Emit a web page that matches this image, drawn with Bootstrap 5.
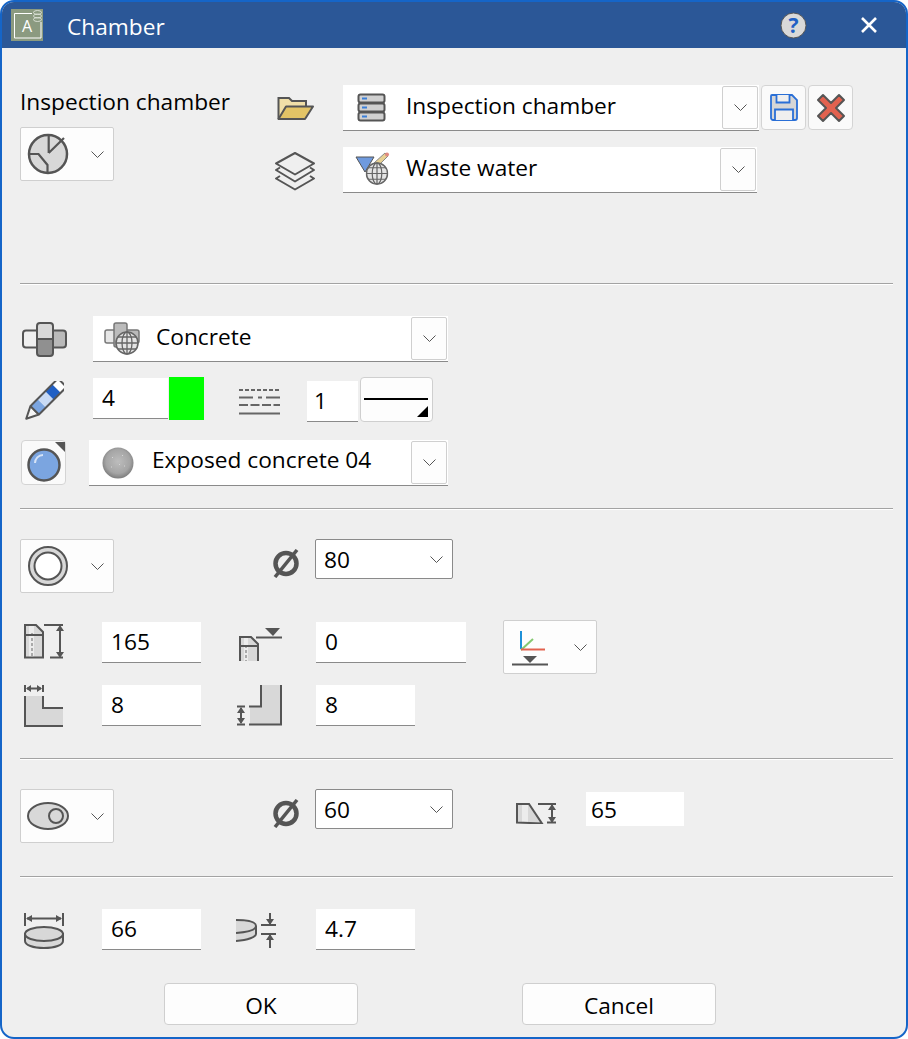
<!DOCTYPE html>
<html lang="en">
<head>
<meta charset="utf-8">
<title>Chamber</title>
<link href="https://cdn.jsdelivr.net/npm/bootstrap@5.3.0/dist/css/bootstrap.min.css" rel="stylesheet">
<style>
html,body{margin:0;width:908px;height:1039px;background:#fff;overflow:hidden}
body{font-family:"Open Sans","Noto Sans","Liberation Sans",sans-serif;font-size:22.7px;color:#000}
svg{display:block;flex:none}
.win{width:908px;height:1039px;border:2px solid #1565c8;border-radius:14px;background:#efefef;overflow:hidden}
.tbar{height:46px;background:#2b5797;color:#fff;padding-left:9px}
.ttl{font-size:22.7px;margin-left:24px;margin-top:5px;flex:1}
.helpi{margin-right:54px}
.closei{margin-right:29px}
.wbody{padding:0 13px 0 18px}
.sep{margin:0;opacity:1;border:0;border-top:1px solid #a3a3a3;border-bottom:1px solid #fff;height:2px}
.s1{height:235px;padding-top:37px}
.s2{height:223px;padding-top:31px}
.s3{height:248px;padding-top:29px}
.s4{height:116px;padding-top:29px}
.s5{padding-top:31px}
.lcol{width:257px}
.lbl{height:34px;line-height:33px;white-space:nowrap}
.ddb{width:94px;height:54px;background:#fdfdfd;border:1px solid #cfcfcf;border-radius:2px;padding:0 9px 0 6px}
.combo{height:46px;background:#fff;border-bottom:1px solid #8a8a8a;padding-left:14px;padding-right:1px}
.ctext{margin-left:20px;flex:1;white-space:nowrap;padding-bottom:2px}
.ctext.cup{padding-bottom:4px;margin-left:18px}
.cbtn{width:36px;height:43px;background:#fdfdfd;border:1px solid #cfcfcf;border-radius:2px;margin-top:1px;align-self:flex-start}
.w416{width:416px}.w414{width:414px}.w355{width:355px}.w359{width:359px}
.sq{width:45px;height:45px;background:#fafafa;border:1px solid #d4d4d4;border-radius:4px;padding:0}
.form-control.fld{background:#fff;border:0;border-bottom:1px solid #8a8a8a;border-radius:0;height:41px;padding:0 0 2px 9px;font-size:22.7px;color:#000;box-shadow:none;flex:none}
.form-control.nob{border-bottom:0;height:34px;padding:2px 0 0 5px}
.w99{width:99px}.w150{width:150px}.w75{width:75px}.form-control.w51{width:51px;padding-left:7px}.w98{width:98px}
.swatch{width:35px;height:43px;background:#0f0;margin-left:1px}
.lnb{width:73px;height:45px;background:#fdfdfd;border:1px solid #cfcfcf;border-radius:4px;margin-left:2px;padding:0}
.form-select.sel{width:138px;height:40px;border:1px solid #8a8a8a;border-radius:2px;padding:2px 0 0 8px;font-size:22.7px;color:#000;box-shadow:none;background-color:#fff;background-size:13px 7px;background-position:right 9px center;background-image:url("data:image/svg+xml,%3Csvg xmlns='http://www.w3.org/2000/svg' viewBox='0 0 13 7'%3E%3Cpath d='M.5.5l6 6 6-6' fill='none' stroke='%23555'/%3E%3C/svg%3E")}
.mbtn{width:194px;height:42px;background:#fdfdfd;border:1px solid #cfcfcf;border-radius:4px;font-size:22.7px;color:#000;padding:4px 0 0}
</style>
</head>
<body>
<svg width="0" height="0" class="position-absolute">
<defs>
<symbol id="chev" viewBox="0 0 13 7"><path d="M.5.5l6 6 6-6" fill="none" stroke="#555" stroke-width="1"/></symbol>
<symbol id="globe" viewBox="0 0 24 24"><circle cx="12" cy="12" r="11" fill="#e4e4e4" stroke="#666" stroke-width="1.6"/><ellipse cx="12" cy="12" rx="5" ry="11" fill="none" stroke="#666" stroke-width="1.3"/><path d="M12 1v22M1 12h22M3 6h18M3 18h18" fill="none" stroke="#666" stroke-width="1.3"/></symbol>
<symbol id="dia" viewBox="0 0 26 29"><circle cx="13" cy="14.500" r="10.500" fill="none" stroke="#555" stroke-width="4.500"/><path d="M2 28L24 1" stroke="#555" stroke-width="3.500"/></symbol>
</defs>
</svg>
<div class="win d-flex flex-column">
  <div class="tbar d-flex align-items-center">
    <svg width="32" height="32" viewBox="0 0 32 32"><rect width="32" height="32" fill="#8b9a80"/><path d="M3.500 4.500H21M30 13V29H3.500V4.500" fill="none" stroke="#fff"/><text x="16" y="23" text-anchor="middle" font-size="16" fill="#fff" font-family="Open Sans">A</text><g fill="none" stroke="#dfe4da" stroke-width=".9"><ellipse cx="26.500" cy="3.500" rx="4" ry="2"/><ellipse cx="26.500" cy="7" rx="4" ry="2"/><ellipse cx="26.500" cy="10.500" rx="4" ry="2"/></g></svg>
    <div class="ttl">Chamber</div>
    <svg class="helpi" width="27" height="27" viewBox="0 0 27 27"><circle cx="13.500" cy="13.500" r="12.500" fill="#d9d9d9" stroke="#555"/><text x="13.500" y="21" text-anchor="middle" font-size="21" font-weight="700" fill="#2060c4" font-family="Open Sans">?</text></svg>
    <svg class="closei" width="16" height="16" viewBox="0 0 16 16"><path d="M1 1l14 14M15 1L1 15" stroke="#fff" stroke-width="2.600"/></svg>
  </div>
  <div class="wbody">
    <section class="s1 d-flex">
      <div class="lcol">
        <div class="lbl">Inspection chamber</div>
        <button class="ddb mt-2 d-flex align-items-center justify-content-between" type="button" aria-label="Type">
          <svg width="42" height="42" viewBox="0 0 42 42"><circle cx="21" cy="21" r="19" fill="#d8d8d8" stroke="#555" stroke-width="2.500"/><path d="M21.700 2v18M37 5L21.700 20M2 21h9.500l9 11v9" fill="none" stroke="#555" stroke-width="2.200"/></svg>
          <svg width="13" height="7"><use href="#chev"/></svg>
        </button>
      </div>
      <div>
        <div class="d-flex">
          <div class="d-flex align-items-center" style="width:66px">
            <svg width="37" height="25" viewBox="0 0 37 25"><path d="M1.500 23V2H12l3 3h14v6" fill="#f0dfa8" stroke="#555" stroke-width="2"/><path d="M1.500 23L9 10.500H36L28 23z" fill="#e3c466" stroke="#555" stroke-width="2" stroke-linejoin="round"/></svg>
          </div>
          <div class="combo w416 d-flex align-items-center">
            <svg width="29" height="29" viewBox="0 0 29 29"><g fill="#d0d0d0" stroke="#555" stroke-width="2"><rect x="1.500" y="1.500" width="26" height="8" rx="2"/><rect x="1.500" y="10.500" width="26" height="8" rx="2"/><rect x="1.500" y="19.500" width="26" height="8" rx="2"/></g><path d="M5 5.500h5M5 14.500h5M5 23.500h5" stroke="#3a7fd8" stroke-width="2"/></svg>
            <div class="ctext">Inspection chamber</div>
            <div class="cbtn d-flex align-items-center justify-content-center"><svg width="13" height="7"><use href="#chev"/></svg></div>
          </div>
          <button class="sq d-flex align-items-center justify-content-center" style="margin-left:2px" type="button" aria-label="Save">
            <svg width="28" height="27" viewBox="0 0 28 27"><path d="M2 1h20l5 5v18a2 2 0 0 1-2 2H3a2 2 0 0 1-2-2V2a1 1 0 0 1 1-1z" fill="#d6d6d6" stroke="#2a6fd6" stroke-width="1.800"/><path d="M6.500 1v7.500h13V1M5 26V15.500h18V26" fill="#efefef" stroke="#2a6fd6" stroke-width="1.800"/></svg>
          </button>
          <button class="sq d-flex align-items-center justify-content-center" style="margin-left:2px" type="button" aria-label="Delete">
            <svg width="30" height="30" viewBox="0 0 30 30"><path d="M2 7l5-5 8 8 8-8 5 5-8 8 8 8-5 5-8-8-8 8-5-5 8-8z" fill="#e2624f" stroke="#555" stroke-width="2" stroke-linejoin="round"/></svg>
          </button>
        </div>
        <div class="d-flex" style="margin-top:16px">
          <div style="width:66px;margin-left:-3px;padding-top:4px;margin-right:3px">
            <svg width="42" height="40" viewBox="0 0 42 40"><g fill="none" stroke="#555" stroke-width="2" stroke-linejoin="round"><path d="M21 2L40 12.500 21 23.500 2 12.500z"/><path d="M6 16.500L2 19l19 11.500L40 19l-4-2.500"/><path d="M6 25L2 27.500l19 11 19-11-4-2.500"/></g></svg>
          </div>
          <div class="combo w414 d-flex align-items-center">
            <svg width="36" height="36" viewBox="0 0 36 36" style="margin-left:-2px;margin-right:-5px"><path d="M1 5h18l-9 15z" fill="#6f9ade" stroke="#555" stroke-width="1"/><path d="M19 11L30 1l3 3-10 10z" fill="#e8d193" stroke="#888"/><circle cx="32" cy="2.500" r="2" fill="#e08a80"/><use href="#globe" x="10.500" y="10" width="23" height="23"/></svg>
            <div class="ctext">Waste water</div>
            <div class="cbtn d-flex align-items-center justify-content-center"><svg width="13" height="7"><use href="#chev"/></svg></div>
          </div>
        </div>
      </div>
    </section>
    <hr class="sep">
    <section class="s2">
      <div class="d-flex">
        <div class="d-flex align-items-center" style="width:73px;padding-left:2px">
          <svg width="45" height="35" viewBox="0 0 45 35"><rect x="1" y="8.500" width="20" height="17" rx="3" fill="#efefef" stroke="#555" stroke-width="2"/><rect x="26" y="8.500" width="18" height="17" rx="3" fill="#b9b9b9" stroke="#555" stroke-width="2"/><path d="M15 17V4a3 3 0 0 1 3-3h10a3 3 0 0 1 3 3v13z" fill="#d8d8d8" stroke="#555" stroke-width="2"/><path d="M15 17v14a3 3 0 0 0 3 3h10a3 3 0 0 0 3-3V17z" fill="#909090" stroke="#555" stroke-width="2"/></svg>
        </div>
        <div class="combo w355 d-flex align-items-center" style="padding-left:11px">
          <svg width="36" height="33" viewBox="0 0 36 33"><rect x="1" y="8" width="14" height="13" rx="2" fill="#e6e6e6" stroke="#777" stroke-width="1.500"/><rect x="20" y="8" width="15" height="13" rx="2" fill="#b9b9b9" stroke="#777" stroke-width="1.500"/><rect x="10" y="1" width="13" height="24" rx="2" fill="#bbb" stroke="#777" stroke-width="1.500"/><use href="#globe" x="11" y="9" width="24" height="24"/></svg>
          <div class="ctext" style="margin-left:16px">Concrete</div>
          <div class="cbtn d-flex align-items-center justify-content-center"><svg width="13" height="7"><use href="#chev"/></svg></div>
        </div>
      </div>
      <div class="d-flex align-items-start" style="margin-top:15px;height:46px">
        <div style="width:73px;padding:4px 0 0 4px">
          <svg width="40" height="40" viewBox="0 0 40 40"><g transform="translate(1.500 38.500) rotate(-45)"><path d="M1 0L13-6V6z" fill="#f5f5f5" stroke="#555" stroke-width="2" stroke-linejoin="round"/><rect x="13" y="-6" width="10" height="12" fill="#7ba5e0"/><rect x="23" y="-6" width="11" height="12" fill="#c8daf4"/><rect x="34" y="-6" width="10" height="12" fill="#2160c4"/><rect x="44" y="-6" width="8" height="12" fill="#fff"/><rect x="13" y="-6" width="39" height="12" rx="1.500" fill="none" stroke="#555" stroke-width="2"/></g></svg>
        </div>
        <input class="form-control fld w75" style="margin-top:1px" value="4" aria-label="Pen">
        <div class="swatch"></div>
        <div style="padding:11px 0 0 35px;width:103px">
          <svg width="41" height="27" viewBox="0 0 41 27"><g fill="none" stroke="#666" stroke-width="1.800"><path d="M0 2h41" stroke-dasharray="4 2"/><path d="M0 9.500h14M19 9.500h4M27 9.500h14"/><path d="M0 17h41" stroke-dasharray="9 2.500"/><path d="M0 25.500h41"/></g></svg>
        </div>
        <input class="form-control fld w51" style="margin-top:4px" value="1" aria-label="Line type">
        <button class="lnb" type="button" aria-label="Line">
          <svg width="71" height="43" viewBox="0 0 71 43"><path d="M3 21h64" stroke="#000" stroke-width="2"/><path d="M56 39L67 28v11z" fill="#000"/></svg>
        </button>
      </div>
      <div class="d-flex align-items-start" style="margin-top:17px">
        <button class="sq d-flex" style="margin-left:1px;margin-right:23px" type="button" aria-label="Material">
          <svg width="43" height="43" viewBox="0 0 43 43"><circle cx="22" cy="24" r="15.500" fill="#7ba5e0" stroke="#555" stroke-width="2.500"/><path d="M13 22a8 8 0 0 1 8-8" fill="none" stroke="#d6e3f6" stroke-width="2"/><path d="M33 1h10v10z" fill="#555"/></svg>
        </button>
        <div class="combo w359 d-flex align-items-center" style="padding-left:13px">
          <svg width="32" height="32" viewBox="0 0 32 32"><defs><radialGradient id="sph" cx="50%" cy="45%" r="55%"><stop offset="0" stop-color="#bdbdbd"/><stop offset=".7" stop-color="#a5a5a5"/><stop offset="1" stop-color="#7d7d7d"/></radialGradient></defs><circle cx="16" cy="16" r="15.500" fill="url(#sph)"/><path d="M10 10l1 1M20 8l1 1M17 17l1 1M22 19l1 0M9 20l1 0" stroke="#d5d5d5"/></svg>
          <div class="ctext cup">Exposed concrete 04</div>
          <div class="cbtn d-flex align-items-center justify-content-center"><svg width="13" height="7"><use href="#chev"/></svg></div>
        </div>
      </div>
    </section>
    <hr class="sep">
    <section class="s3">
      <div class="d-flex align-items-start">
        <button class="ddb d-flex align-items-center justify-content-between" type="button" aria-label="Shape">
          <svg width="42" height="42" viewBox="0 0 42 42"><circle cx="21" cy="21" r="19" fill="#d8d8d8" stroke="#555" stroke-width="2"/><circle cx="21" cy="21" r="13.500" fill="#fff" stroke="#555" stroke-width="2"/></svg>
          <svg width="13" height="7"><use href="#chev"/></svg>
        </button>
        <div style="width:201px;padding:10px 0 0 159px"><svg width="26" height="29"><use href="#dia"/></svg></div>
        <select class="form-select sel" aria-label="Diameter"><option>80</option></select>
      </div>
      <div class="d-flex align-items-start" style="margin-top:27px;height:54px">
        <div style="width:82px;padding:4px 0 0 4px">
          <svg width="41" height="35" viewBox="0 0 41 35"><path d="M1 33V1h11l7 7v25z" fill="#d8d8d8"/><path d="M5 1.500h5V33H5z" fill="#ececec"/><path d="M8 9v24" stroke="#aaa" stroke-width="2" stroke-dasharray="3 2"/><path d="M1 33.500V1h11l7 7v25.500zM1 11h18" fill="none" stroke="#555" stroke-width="2"/><path d="M20 1h19M26 33.500h13" stroke="#555" stroke-width="2"/><path d="M36 3v29" stroke="#555" stroke-width="2"/><path d="M36 1l-4 6h8zM36 34l-4-6h8z" fill="#555"/></svg>
        </div>
        <input class="form-control fld w99" style="margin-top:2px" value="165" aria-label="Height">
        <div style="width:115px;padding:8px 0 0 37px">
          <svg width="45" height="33" viewBox="0 0 45 33"><path d="M2 33V9h11l6 6v18z" fill="#d8d8d8"/><path d="M6 9h4v24H6z" fill="#ececec"/><path d="M8 17v16" stroke="#aaa" stroke-width="2" stroke-dasharray="3 2"/><path d="M2 33V9h11l7 7v17M2 18h18" fill="none" stroke="#555" stroke-width="2"/><path d="M18 9.500h26" stroke="#555" stroke-width="2"/><path d="M27 0h15l-7 8z" fill="#555"/></svg>
        </div>
        <input class="form-control fld w150" style="margin-top:2px" value="0" aria-label="Level">
        <button class="ddb d-flex align-items-center justify-content-between" style="margin-left:37px;padding-left:8px" type="button" aria-label="Reference">
          <svg width="37" height="40" viewBox="0 0 37 40"><path d="M9 4v18" stroke="#1e90d8" stroke-width="2"/><path d="M9 23l12-11" stroke="#84c870" stroke-width="2"/><path d="M9 22.500h24" stroke="#e2624f" stroke-width="2"/><path d="M11 29h14l-7 7z" fill="#555"/><path d="M0 37.500h36" stroke="#555" stroke-width="2"/></svg>
          <svg width="13" height="7"><use href="#chev"/></svg>
        </button>
      </div>
      <div class="d-flex align-items-start" style="margin-top:11px">
        <div style="width:82px;padding:0 0 0 4px">
          <svg width="40" height="42" viewBox="0 0 40 42"><path d="M1 11h18v12h20v17H1z" fill="#d8d8d8"/><path d="M1 11v30h38M19 11v12h20" fill="none" stroke="#555" stroke-width="2"/><path d="M1 0v7M19 0v7" stroke="#555" stroke-width="2"/><path d="M3 3.500h14" stroke="#555" stroke-width="2"/><path d="M2 3.500l5-3.500v7zM18 3.500l-5-3.500v7z" fill="#555"/></svg>
        </div>
        <input class="form-control fld w99" value="8" aria-label="Wall">
        <div style="width:115px;padding:0 0 0 35px">
          <svg width="46" height="41" viewBox="0 0 46 41"><path d="M26 0h18v40H14V22h12z" fill="#d8d8d8"/><path d="M25 0v21.500H13M45 0v39.500H13" fill="none" stroke="#555" stroke-width="2"/><path d="M1 21.500h8M1 39.500h8" stroke="#555" stroke-width="2"/><path d="M5 23v15" stroke="#555" stroke-width="2"/><path d="M5 22l-4 6h8zM5 39l-4-6h8z" fill="#555"/></svg>
        </div>
        <input class="form-control fld w99" value="8" aria-label="Floor">
      </div>
    </section>
    <hr class="sep">
    <section class="s4">
      <div class="d-flex align-items-start">
        <button class="ddb d-flex align-items-center justify-content-between" type="button" aria-label="Cover">
          <svg width="42" height="28" viewBox="0 0 42 28"><ellipse cx="21" cy="14" rx="20" ry="13" fill="#d8d8d8" stroke="#555" stroke-width="2"/><circle cx="29" cy="14" r="7" fill="none" stroke="#555" stroke-width="2"/></svg>
          <svg width="13" height="7"><use href="#chev"/></svg>
        </button>
        <div style="width:201px;padding:10px 0 0 159px"><svg width="26" height="29"><use href="#dia"/></svg></div>
        <select class="form-select sel" aria-label="Diameter"><option>60</option></select>
        <div style="width:133px;padding:14px 0 0 63px">
          <svg width="40" height="21" viewBox="0 0 40 21"><path d="M1 1h12l12 19H1z" fill="#d8d8d8"/><path d="M6 1h6v19H6z" fill="#ececec"/><path d="M1 19.500V1h12l13 19.500z" fill="none" stroke="#555" stroke-width="2"/><path d="M22 1h18M31 19.500h9" stroke="#555" stroke-width="2"/><path d="M36 2v17" stroke="#555" stroke-width="2"/><path d="M36 1l-4 6h8zM36 20l-4-6h8z" fill="#555"/></svg>
        </div>
        <input class="form-control fld nob w98" style="margin-top:3px" value="65" aria-label="Cone">
      </div>
    </section>
    <hr class="sep">
    <section class="s5">
      <div class="d-flex align-items-start">
        <div style="width:82px;padding:4px 0 0 4px">
          <svg width="41" height="36" viewBox="0 0 41 36"><path d="M1 0v13M39 0v13" stroke="#555" stroke-width="2"/><path d="M3 5.500h34" stroke="#555" stroke-width="2"/><path d="M2 5.500l6-3.500v7zM38 5.500l-6-3.500v7z" fill="#555"/><path d="M1 21v7c0 4 8 7 19 7s19-3 19-7v-7z" fill="#d8d8d8" stroke="#555" stroke-width="2"/><ellipse cx="20" cy="21" rx="19" ry="7" fill="#d8d8d8" stroke="#555" stroke-width="2"/></svg>
        </div>
        <input class="form-control fld w99" value="66" aria-label="Diameter">
        <div style="width:115px;padding:4px 0 0 35px">
          <svg width="41" height="36" viewBox="0 0 41 36"><path d="M0 7c12 0 20 2 20 6v8c0 3-8 6-20 7z" fill="#d8d8d8"/><path d="M0 7c12 0 20 2 20 6s-8 6-20 7M20 13v8c0 3-8 6-20 7" fill="none" stroke="#555" stroke-width="2"/><path d="M25 12h15M25 21h15" stroke="#555" stroke-width="2"/><path d="M34 0v11M34 22v13" stroke="#555" stroke-width="2"/><path d="M34 12l-4-6h8zM34 21l-4 6h8z" fill="#555"/></svg>
        </div>
        <input class="form-control fld w99" value="4.7" aria-label="Thickness">
      </div>
      <div class="d-flex" style="margin-top:33px;padding-left:144px;gap:164px">
        <button class="btn mbtn" type="button">OK</button>
        <button class="btn mbtn" type="button">Cancel</button>
      </div>
    </section>
  </div>
</div>
<script src="https://cdn.jsdelivr.net/npm/bootstrap@5.3.0/dist/js/bootstrap.bundle.min.js"></script>
</body>
</html>
